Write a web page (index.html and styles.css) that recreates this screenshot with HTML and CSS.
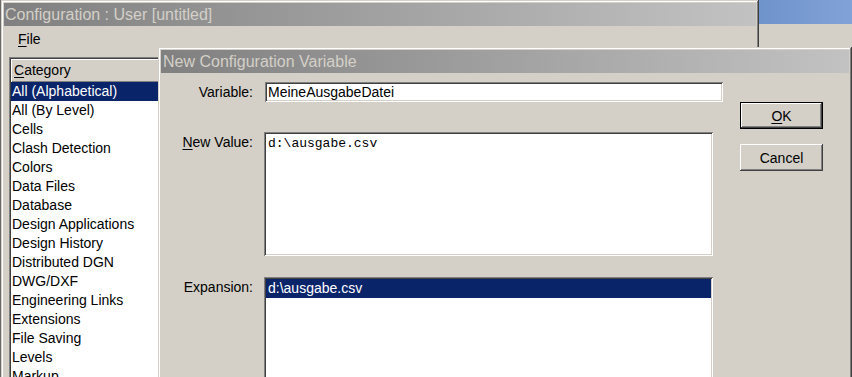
FILE: index.html
```html
<!DOCTYPE html>
<html>
<head>
<meta charset="utf-8">
<title>Configuration : User [untitled]</title>
<link rel="stylesheet" href="styles.css">
</head>
<body>
<div class="desktop">
  <div class="win other">
    <div class="other-title"></div>
  </div>

  <div class="win main">
    <div class="titlebar">Configuration : User [untitled]</div>
    <div class="menubar"><span class="menu-item"><u>F</u>ile</span></div>
    <div class="client">
      <div class="listbox cat">
        <div class="list-header"><u>C</u>ategory</div>
        <div class="item sel">All (Alphabetical)</div>
        <div class="item">All (By Level)</div>
        <div class="item">Cells</div>
        <div class="item">Clash Detection</div>
        <div class="item">Colors</div>
        <div class="item">Data Files</div>
        <div class="item">Database</div>
        <div class="item">Design Applications</div>
        <div class="item">Design History</div>
        <div class="item">Distributed DGN</div>
        <div class="item">DWG/DXF</div>
        <div class="item">Engineering Links</div>
        <div class="item">Extensions</div>
        <div class="item">File Saving</div>
        <div class="item">Levels</div>
        <div class="item">Markup</div>
        <div class="item">Multiline Styles</div>
      </div>
    </div>
  </div>

  <div class="win dialog">
    <div class="titlebar dlg-title">New Configuration Variable</div>
    <div class="dlg-body">
      <div class="form">
        <div class="lbl lbl-mid">Variable:</div>
        <div class="input">MeineAusgabeDatei</div>
        <div class="lbl r2"><u>N</u>ew Value:</div>
        <div class="textarea r2">d:\ausgabe.csv</div>
        <div class="lbl r3">Expansion:</div>
        <div class="listbox exp r3"><div class="item sel">d:\ausgabe.csv</div></div>
      </div>
      <div class="buttons">
        <div class="btn default"><span><u>O</u>K</span></div>
        <div class="btn">Cancel</div>
      </div>
    </div>
  </div>
</div>
</body>
</html>
```
FILE: styles.css
```css
html, body {
  margin: 0;
  height: 377px;
  overflow: hidden;
}
body {
  background: #6b6b6b;
  font-family: "Liberation Sans", Arial, sans-serif;
  font-size: 14px;
  line-height: 16px;
  color: #000;
}
u { text-decoration: underline; text-underline-offset: 2px; }

.desktop {
  position: relative;
  width: 852px;
  height: 377px;
  overflow: hidden;
}

.win {
  position: absolute;
  box-sizing: border-box;
  background: #d4d0c8;
  padding: 3px;
  display: flex;
  flex-direction: column;
  box-shadow: inset -1px -1px #404040, inset 1px 1px #d4d0c8,
              inset -2px -2px #808080, inset 2px 2px #ffffff;
}

.other {
  left: 759px;
  top: 0;
  width: 100px;
  height: 400px;
  padding: 0;
  box-shadow: none;
}
.other-title {
  height: 24px;
  background: linear-gradient(to right, #6f93cc, #82a3d8);
}

.main {
  left: 1px;
  top: 0;
  width: 758px;
  height: 420px;
}

.titlebar {
  flex: none;
  height: 23px;
  line-height: 23px;
  padding-left: 1px;
  background: linear-gradient(to right, #808080, #c2c2c2);
  color: #d4d0c8;
  font-size: 16px;
  white-space: nowrap;
  overflow: hidden;
}
.dlg-title { padding-left: 2px; }

.menubar {
  flex: none;
  height: 22px;
  box-sizing: border-box;
  padding: 5px 0 0 8px;
  display: flex;
}
.menu-item { padding: 0 6px; }

.client {
  flex: 1;
  padding: 9px 0 0 5px;
}

.listbox {
  background: #fff;
  padding: 2px;
  box-sizing: border-box;
  box-shadow: inset 1px 1px #808080, inset -1px -1px #ffffff,
              inset 2px 2px #404040, inset -2px -2px #d4d0c8;
}
.cat {
  width: 300px;
  height: 400px;
}
.list-header {
  height: 23px;
  line-height: 23px;
  padding-left: 3px;
  background: #d4d0c8;
  box-shadow: inset 1px 1px #ffffff, inset -1px -1px #808080;
}
.item {
  height: 19px;
  line-height: 19px;
  padding-left: 1px;
  white-space: nowrap;
}
.item.sel {
  background: #0a246a;
  color: #fff;
}

.dialog {
  left: 158px;
  top: 47px;
  width: 694px;
  height: 360px;
}

.dlg-body {
  flex: 1;
  display: flex;
  align-items: flex-start;
}

.form {
  display: grid;
  grid-template-columns: 92px 459px;
  column-gap: 11px;
  padding-top: 9px;
  align-items: start;
}

.lbl {
  text-align: right;
  padding-top: 2px;
  white-space: nowrap;
}
.lbl-mid {
  align-self: center;
  padding-top: 0;
}

.input {
  margin-left: 1px;
  width: 458px;
  height: 20px;
  box-sizing: border-box;
  padding: 2px 3px;
  line-height: 16px;
  background: #fff;
  box-shadow: inset 1px 1px #808080, inset -1px -1px #ffffff,
              inset 2px 2px #404040, inset -2px -2px #d4d0c8;
}

.textarea {
  width: 449px;
  height: 124px;
  box-sizing: border-box;
  padding: 4px 4px;
  background: #fff;
  font-family: "Liberation Mono", "Courier New", monospace;
  font-size: 13px;
  line-height: 15px;
  box-shadow: inset 1px 1px #808080, inset -1px -1px #ffffff,
              inset 2px 2px #404040, inset -2px -2px #d4d0c8;
}

.exp {
  width: 449px;
  height: 140px;
}
.exp .item { padding-left: 2px; }

.r2 { margin-top: 30px; }
.r3 { margin-top: 21px; }

.buttons {
  margin-left: 17px;
  padding-top: 29px;
  display: flex;
  flex-direction: column;
  gap: 15px;
}

.btn {
  width: 83px;
  height: 27px;
  box-sizing: border-box;
  display: flex;
  align-items: center;
  justify-content: center;
  box-shadow: inset -1px -1px #404040, inset 1px 1px #ffffff,
              inset -2px -2px #808080, inset 2px 2px #d4d0c8;
}
.btn.default {
  box-shadow: inset 0 0 0 1px #000000, inset -2px -2px #404040,
              inset 2px 2px #ffffff, inset -3px -3px #808080;
}
```
